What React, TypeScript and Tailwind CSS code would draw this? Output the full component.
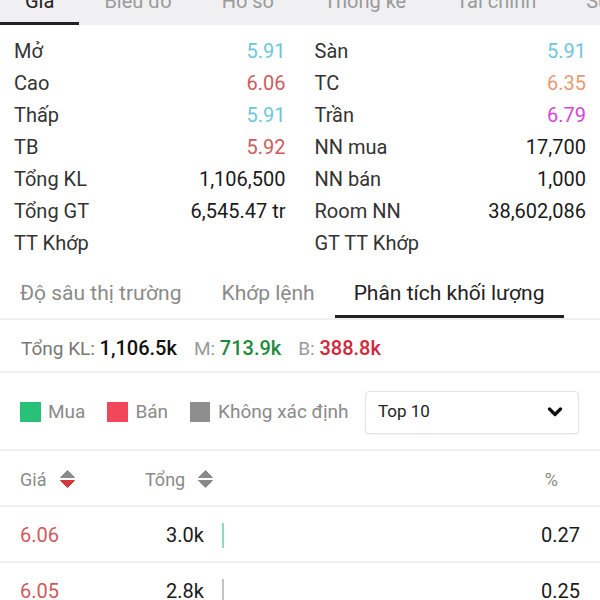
import React from 'react';

const topTabs = ['Giá', 'Biểu đồ', 'Hồ sơ', 'Thống kê', 'Tài chính', 'Sự kiện'];

type Cell = { label: string; value?: string; color?: string };

const leftRows: Cell[] = [
	{ label: 'Mở', value: '5.91', color: 'text-[#6ec6dd]' },
	{ label: 'Cao', value: '6.06', color: 'text-[#cf5a5e]' },
	{ label: 'Thấp', value: '5.91', color: 'text-[#6ec6dd]' },
	{ label: 'TB', value: '5.92', color: 'text-[#cf5a5e]' },
	{ label: 'Tổng KL', value: '1,106,500' },
	{ label: 'Tổng GT', value: '6,545.47 tr' },
	{ label: 'TT Khớp' },
];

const rightRows: Cell[] = [
	{ label: 'Sàn', value: '5.91', color: 'text-[#6ec6dd]' },
	{ label: 'TC', value: '6.35', color: 'text-[#e89a72]' },
	{ label: 'Trần', value: '6.79', color: 'text-[#d645d6]' },
	{ label: 'NN mua', value: '17,700' },
	{ label: 'NN bán', value: '1,000' },
	{ label: 'Room NN', value: '38,602,086' },
	{ label: 'GT TT Khớp' },
];

const volumeRows = [
	{ price: '6.06', total: '3.0k', pct: '0.27', bar: 'bg-[#92d9bd]' },
	{ price: '6.05', total: '2.8k', pct: '0.25', bar: 'bg-[#c4c4c4]' },
];

const SortIcon = ({ down = '#8a8a8a' }: { down?: string }) => (
	<svg width="17" height="20" viewBox="0 0 17 20">
		<path d="M8.5 1.5 L15.5 8.5 L1.5 8.5 Z" fill="#8a8a8a" stroke="#8a8a8a" strokeWidth="1" strokeLinejoin="round" />
		<path d="M1.5 11.5 L15.5 11.5 L8.5 18.5 Z" fill={down} stroke={down} strokeWidth="1" strokeLinejoin="round" />
	</svg>
);

const InfoColumn = ({ rows }: { rows: Cell[] }) => (
	<div className="flex flex-col">
		{rows.map((r) => (
			<div key={r.label} className="flex h-[32px] items-center justify-between text-[20px] leading-[32px]">
				<span className="text-[#333]">{r.label}</span>
				{r.value && <span className={r.color ?? 'text-[#1a1a1a]'}>{r.value}</span>}
			</div>
		))}
	</div>
);

export default function App() {
	return (
		<div className="h-[600px] w-[600px] overflow-hidden bg-white font-['Roboto',sans-serif]">
			{/* top tabs, scrolled so only the bottom shows */}
			<div className="flex h-[25px] overflow-hidden whitespace-nowrap bg-[#f0f0f2]">
				{topTabs.map((t, i) => (
					<div
						key={t}
						className={`flex-shrink-0 px-[25px] text-[20px] ${i === 0 ? 'border-b-[3px] border-[#222] text-[#222]' : 'text-[#9a9a9a]'}`}
					>
						<div className="-mt-[13px] leading-[28px]">{t}</div>
					</div>
				))}
			</div>

			<div className="grid grid-cols-2 gap-x-[29px] px-[14px] pt-[10px]">
				<InfoColumn rows={leftRows} />
				<InfoColumn rows={rightRows} />
			</div>

			{/* sub tabs */}
			<div className="flex h-[61px] whitespace-nowrap border-b-2 border-[#efefef] text-[21px]">
				<div className="px-[20px] pt-[20px] leading-[28px] text-[#8a8a8a]">Độ sâu thị trường</div>
				<div className="px-[20px] pt-[20px] leading-[28px] text-[#8a8a8a]">Khớp lệnh</div>
				<div className="border-b-[3px] border-[#222] px-[19px] pt-[20px] leading-[28px] text-[#222]">
					Phân tích khối lượng
				</div>
			</div>

			<div className="flex h-[53px] items-center gap-[17px] border-b-2 border-[#efefef] px-[21px] pt-[5px] text-[19px]">
				<span>
					<span className="text-[#777]">Tổng KL: </span>
					<span className="text-[20px] font-medium text-[#111]">1,106.5k</span>
				</span>
				<span>
					<span className="text-[#999]">M: </span>
					<span className="text-[20px] font-medium text-[#1f8a3b]">713.9k</span>
				</span>
				<span>
					<span className="text-[#999]">B: </span>
					<span className="text-[20px] font-medium text-[#d3263b]">388.8k</span>
				</span>
			</div>

			<div className="flex h-[78px] items-center border-b-2 border-[#efefef] pl-[20px] pr-[21px] pt-[2px] text-[19px] text-[#8a8a8a]">
				<span className="h-[20px] w-[21px] bg-[#27c277]" />
				<span className="ml-[7px]">Mua</span>
				<span className="ml-[22px] h-[20px] w-[21px] bg-[#f2475b]" />
				<span className="ml-[7px]">Bán</span>
				<span className="ml-[22px] h-[20px] w-[20px] bg-[#8e8e8e]" />
				<span className="ml-[8px]">Không xác định</span>
				<div className="ml-auto flex h-[43px] w-[214px] items-center justify-between rounded-[4px] border border-[#e3e3e3] pl-[12px] pr-[15px] shadow-[0_1px_2px_rgba(0,0,0,0.06)]">
					<span className="text-[17px] text-[#222]">Top 10</span>
					<svg width="16" height="10" viewBox="0 0 16 10">
						<path d="M2.5 2 L8 7.5 L13.5 2" fill="none" stroke="#111" strokeWidth="3.2" strokeLinecap="round" strokeLinejoin="round" />
					</svg>
				</div>
			</div>

			<div className="flex h-[56px] items-center border-b-2 border-[#efefef] pl-[20px] pr-[42px] pt-[2px] text-[18px] text-[#8a8a8a]">
				<div className="flex w-[125px] items-center gap-[13px]">
					<span>Giá</span>
					<SortIcon down="#d23a3a" />
				</div>
				<div className="flex items-center gap-[12px]">
					<span>Tổng</span>
					<SortIcon />
				</div>
				<span className="ml-auto">%</span>
			</div>

			{volumeRows.map((r) => (
				<div
					key={r.price}
					className="flex h-[56px] items-center border-b-2 border-[#efefef] pl-[20px] pr-[20px] pt-[2px] text-[20px]"
				>
					<span className="w-[125px] text-[#cf5a5e]">{r.price}</span>
					<span className="w-[59px] text-right text-[#1a1a1a]">{r.total}</span>
					<span className={`ml-[18px] h-[25px] w-[2px] ${r.bar}`} />
					<span className="ml-auto text-[#1a1a1a]">{r.pct}</span>
				</div>
			))}
		</div>
	);
}
